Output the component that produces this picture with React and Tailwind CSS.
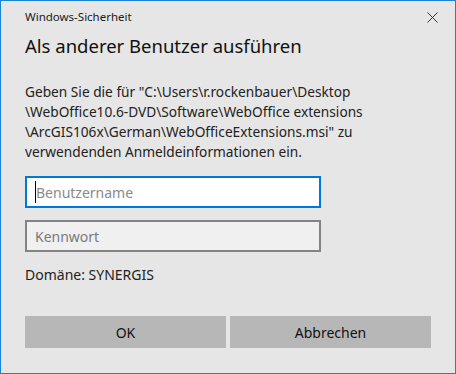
import React from "react";

export default function App() {
  return (
    <div
      className="w-[456px] h-[374px] bg-[#e6e6e6] border border-[#1883d7] text-[#000000] flex flex-col"
      style={{ fontFamily: '"Noto Sans", "Open Sans", sans-serif' }}
    >
      {/* title bar */}
      <div className="h-[31px] flex items-center justify-between pl-6 pr-[17px]">
        <span className="text-[11.5px] text-[#1a1a1a]">Windows-Sicherheit</span>
        <svg width="11" height="11" viewBox="0 0 11 11" className="mt-[2px]">
          <path d="M0.5 0.5 L10.5 10.5 M10.5 0.5 L0.5 10.5" stroke="#333" strokeWidth="1" />
        </svg>
      </div>

      <div className="px-6 flex flex-col">
        <h1 className="text-[18.5px] leading-[28px] text-[#111]">Als anderer Benutzer ausführen</h1>

        <p className="mt-[22px] text-[13.7px] leading-[20px] text-[#222]">
          Geben Sie die für "C:\Users\r.rockenbauer\Desktop
          <br />
          \WebOffice10.6-DVD\Software\WebOffice extensions
          <br />
          \ArcGIS106x\German\WebOfficeExtensions.msi" zu
          <br />
          verwendenden Anmeldeinformationen ein.
        </p>

        <div className="mt-[14px] w-[296px] h-[32px] bg-white border-2 border-[#0078d7] flex items-center pl-[8px]">
          <span className="w-px h-[22px] bg-black"></span>
          <span className="text-[14px] text-[#8a8a8a]">Benutzername</span>
        </div>

        <div className="mt-[12px] w-[296px] h-[32px] bg-[#f0f0f0] border-2 border-[#838383] flex items-center pl-[8px]">
          <span className="text-[14px] text-[#7a7a7a]">Kennwort</span>
        </div>

        <div className="mt-[13px] text-[14px] leading-[20px] text-[#222]">Domäne: SYNERGIS</div>

        <div className="mt-[31px] flex gap-1">
          <button className="w-[201px] h-[32px] bg-[#b7b7b7] text-[14px] text-[#111]">OK</button>
          <button className="w-[201px] h-[32px] bg-[#b7b7b7] text-[14px] text-[#111]">Abbrechen</button>
        </div>
      </div>
    </div>
  );
}
